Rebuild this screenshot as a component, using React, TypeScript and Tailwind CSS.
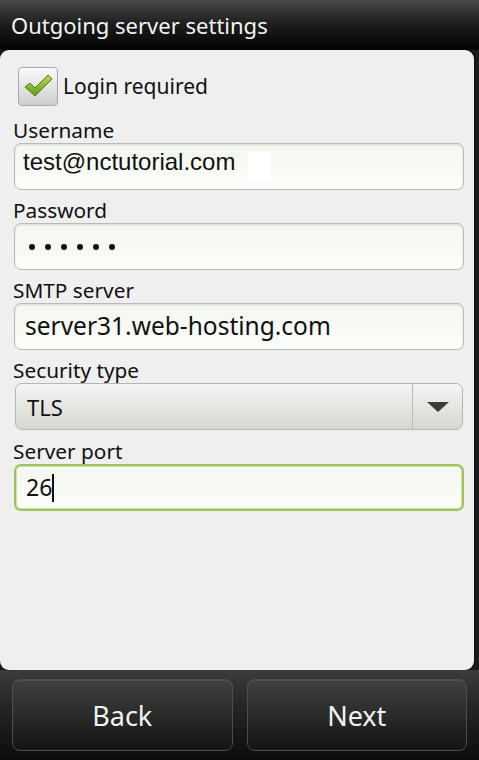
import React from "react";

const droid = { fontFamily: '"Noto Sans", "Open Sans", sans-serif' };

function Label({ children }: { children: React.ReactNode }) {
  return (
    <div className="h-[26px] pl-[13px] text-[20.8px] leading-[26px] text-[#111]" style={droid}>
      {children}
    </div>
  );
}

function Field({ children, focused }: { children: React.ReactNode; focused?: boolean }) {
  return (
    <div
      className={
        "ml-[14px] mr-[10px] flex h-[47px] items-center rounded-[7px] bg-gradient-to-b from-[#f4f7f0] to-[#fbfdf9] pl-[8px] " +
        (focused
          ? "border-2 border-[#9bc35a] shadow-[inset_0_0_0_1px_#cfe3a8]"
          : "border border-[#b9bcb6] shadow-[inset_0_1px_2px_rgba(0,0,0,0.12)]")
      }
    >
      {children}
    </div>
  );
}

export default function App() {
  return (
    <div className="flex h-[760px] w-[479px] flex-col overflow-hidden bg-[#1a1a1a]" style={droid}>
      {/* title bar */}
      <div className="flex h-[50px] items-center bg-gradient-to-b from-[#4a4a4a] via-[#1c1c1c] to-[#050505] pl-[11px]">
        <span className="text-[22px] leading-none text-[#f4f4f4]" style={droid}>
          Outgoing server settings
        </span>
      </div>

      {/* content panel */}
      <div className="mr-[5px] flex h-[620px] flex-col rounded-[9px] bg-[#efefef] pt-[14px] shadow-[1px_0_2px_rgba(0,0,0,0.4)]">
        <div className="flex h-[44px] items-center pl-[18px]">
          <div className="flex h-[39px] w-[40px] items-center justify-center rounded-[4px] border border-[#a9aaa6] bg-gradient-to-b from-[#fafafa] to-[#cfd0cc] shadow-[inset_0_1px_0_#fff]">
            <svg width="30" height="26" viewBox="0 0 30 26">
              <defs>
                <linearGradient id="ck" x1="0" y1="0" x2="0" y2="1">
                  <stop offset="0" stopColor="#b8dc55" />
                  <stop offset="1" stopColor="#5f9a1c" />
                </linearGradient>
              </defs>
              <path
                d="M2 14 L7 10 L12 15 L25 2 L29 6 L12 23 Z"
                fill="url(#ck)"
                stroke="#4e7d17"
                strokeWidth="1"
                strokeLinejoin="round"
              />
            </svg>
          </div>
          <span className="ml-[5px] text-[21px] leading-none text-[#111]">Login required</span>
        </div>

        <div className="mt-[9px]">
          <Label>Username</Label>
          <Field>
            <span
              className="relative -top-[5px] text-[24px] leading-none text-[#111]"
              style={{ fontFamily: '"Liberation Sans", Arial, sans-serif' }}
            >
              test@nctutorial.com
            </span>
            <span className="ml-[13px] h-[29px] w-[23px] bg-white" />
          </Field>
        </div>

        <div className="mt-[7px]">
          <Label>Password</Label>
          <Field>
            <div className="ml-[6px] flex gap-[10px]">
              {[0, 1, 2, 3, 4, 5].map((i) => (
                <span key={i} className="h-[6px] w-[6px] rounded-full bg-[#111]" />
              ))}
            </div>
          </Field>
        </div>

        <div className="mt-[7px]">
          <Label>SMTP server</Label>
          <Field>
            <span className="pl-[2px] text-[24.5px] leading-none text-[#111]">server31.web-hosting.com</span>
          </Field>
        </div>

        <div className="mt-[7px]">
          <Label>Security type</Label>
          <div className="ml-[15px] mr-[11px] flex h-[47px] overflow-hidden rounded-[7px] border border-[#b5b7b2] bg-gradient-to-b from-[#f5f6f3] via-[#e4e6e2] to-[#d4d7d2]">
            <div className="flex flex-1 items-center pl-[11px] text-[22px] leading-none text-[#111]">TLS</div>
            <div className="flex w-[50px] items-center justify-center border-l border-[#b8bab5]">
              <svg width="24" height="12" viewBox="0 0 24 12">
                <path d="M1 1 L23 1 L12 11 Z" fill="#3b3b3b" />
              </svg>
            </div>
          </div>
        </div>

        <div className="mt-[8px]">
          <Label>Server port</Label>
          <Field focused>
            <span className="pl-[2px] text-[23px] leading-none text-[#111]">26</span>
            <span className="h-[28px] w-[2px] bg-[#111]" />
          </Field>
        </div>
      </div>

      {/* bottom bar */}
      <div className="flex flex-1 gap-[14px] bg-gradient-to-b from-[#3a3b3a] via-[#202120] to-[#0b0c0b] px-[12px] pt-[9px] pb-[9px]">
        {["Back", "Next"].map((t) => (
          <div
            key={t}
            className="flex flex-1 items-center justify-center rounded-[8px] border border-[#4c4d4c] bg-gradient-to-b from-[#3e403e] via-[#2a2c2a] to-[#121312] shadow-[inset_0_1px_0_rgba(255,255,255,0.08)]"
          >
            <span className="text-[27px] leading-none text-[#f2f2f2]">{t}</span>
          </div>
        ))}
      </div>
    </div>
  );
}
